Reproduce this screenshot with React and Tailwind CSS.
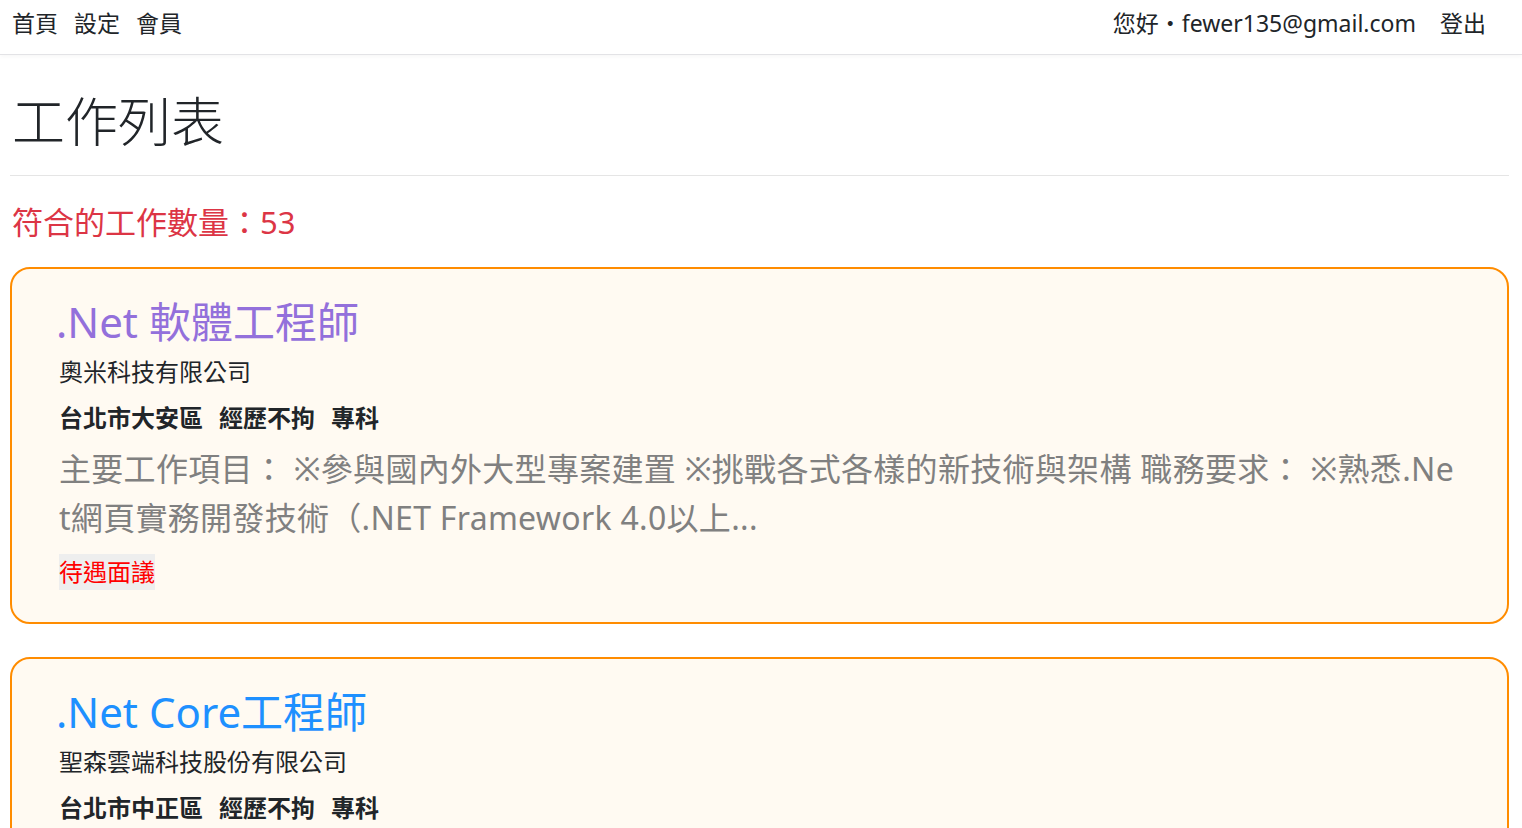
import React from 'react';

const jobs = [
    {
        title: '.Net 軟體工程師',
        color: 'text-[#9370db]',
        company: '奧米科技有限公司',
        meta: ['台北市大安區', '經歷不拘', '專科'],
        desc: ['主要工作項目： ※參與國內外大型專案建置 ※挑戰各式各樣的新技術與架構 職務要求： ※熟悉.Ne', 't網頁實務開發技術（.NET Framework 4.0以上...'],
        salary: '待遇面議',
    },
    {
        title: '.Net Core工程師',
        color: 'text-[#1e90ff]',
        company: '聖森雲端科技股份有限公司',
        meta: ['台北市中正區', '經歷不拘', '專科'],
        desc: ['主要工作項目： ※負責公司雲端服務系統開發與維護 ※參與新產品規劃設計', '職務要求：熟悉 C# 與 .NET Core 開發...'],
        salary: '待遇面議',
    },
];

const JobCard = ({ job }) => (
    <div className="rounded-[20px] border-2 border-[#ff8c00] bg-[#fffaf2] pt-[28px] pb-[32px] pl-[47px] pr-[20px]">
        <h2 className={`-ml-[3px] text-[42px] leading-[50px] ${job.color}`}>{job.title}</h2>
        <div className="mt-[7px] text-[24px] leading-[36px] text-[#212529]">{job.company}</div>
        <div className="mt-[11px] flex gap-[16px] text-[24px] leading-[34px] font-bold text-[#212529]">
            {job.meta.map((m) => (
                <span key={m}>{m}</span>
            ))}
        </div>
        <div className="mt-[9px] text-[32px] leading-[49px] tracking-[0.3px] text-[#808080]">
            {job.desc.map((line, i) => (
                <div key={i} className="whitespace-nowrap">{line}</div>
            ))}
        </div>
        <div className="mt-[12px]">
            <span className="inline-block bg-[#eeeeee] text-[24px] leading-[36px] text-[#ff0000]">{job.salary}</span>
        </div>
    </div>
);

export default function App() {
    return (
        <div className="min-h-screen bg-white text-[#212529]" style={{ fontFamily: '"Noto Sans", "Noto Sans CJK TC", sans-serif' }}>
            <nav className="flex h-[55px] items-start justify-between border-b border-[#e3e3e6] px-[12px] pt-[5px] shadow-[0_2px_4px_rgba(0,0,0,0.03)]">
                <div className="flex gap-[16px] text-[23px] leading-[36px]">
                    <a>首頁</a>
                    <a>設定</a>
                    <a>會員</a>
                </div>
                <div className="flex gap-[24px] pr-[24px] text-[23px] leading-[36px]">
                    <span>您好・fewer135@gmail.com</span>
                    <a>登出</a>
                </div>
            </nav>

            <main className="pl-[10px] pr-[13px]">
                <h1 className="mt-[35px] pl-[2px] text-[53px] leading-[64px] font-light">工作列表</h1>
                <hr className="mt-[21px] border-t border-[#e5e5e5]" />
                <div className="mt-[26px] pl-[2px] text-[31px] leading-[40px] text-[#dc3545]">符合的工作數量：53</div>
                <div className="mt-[25px] flex flex-col gap-[33px]">
                    {jobs.map((job) => (
                        <JobCard key={job.title} job={job} />
                    ))}
                </div>
            </main>
        </div>
    );
}
